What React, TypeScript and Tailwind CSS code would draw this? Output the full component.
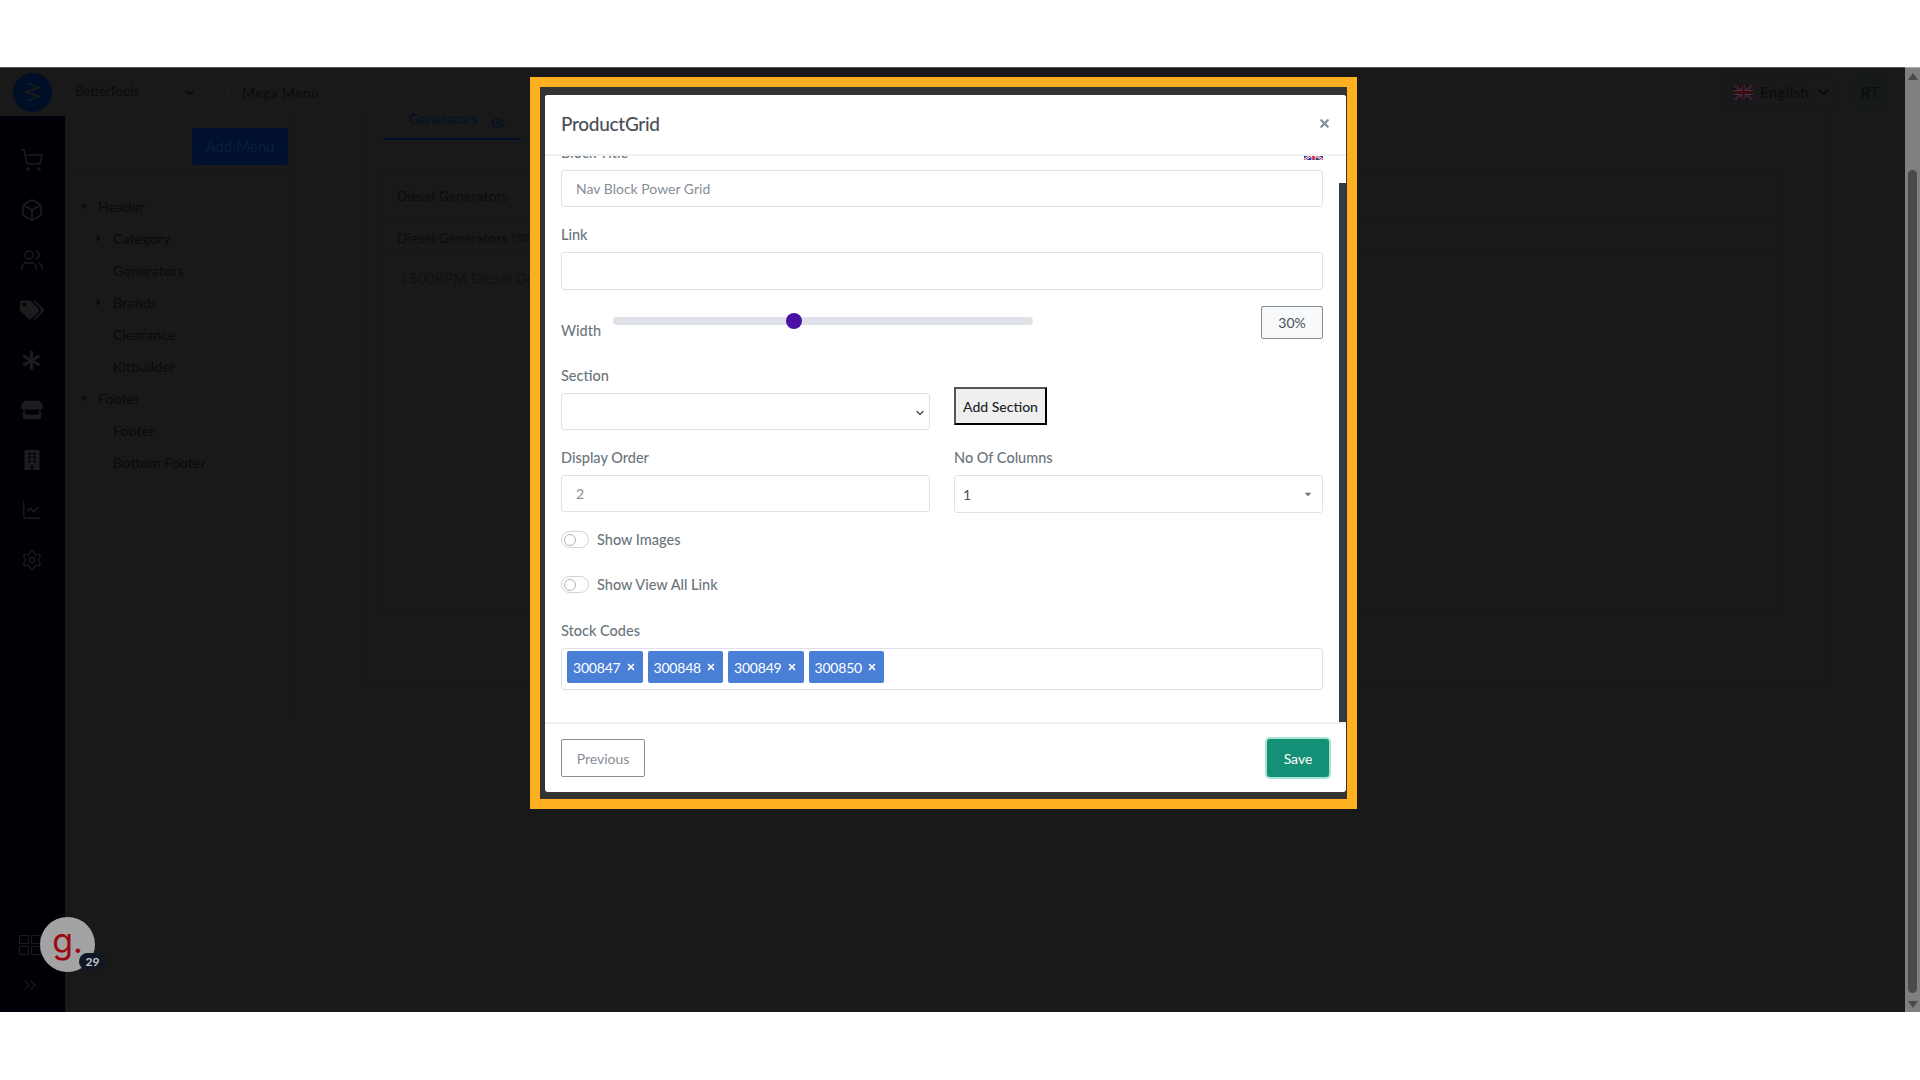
import { Box, ChevronDown, ChevronRight, ChevronsRight, Eye, LineChart, Settings, ShoppingCart, Users, X } from 'lucide-react';
import { FaAsterisk, FaBuilding, FaCaretDown, FaCaretRight, FaStore, FaTags } from 'react-icons/fa';

const tree = [
  { label: 'Header', level: 0, caret: 'down' },
  { label: 'Category', level: 1, caret: 'right' },
  { label: 'Generators', level: 1 },
  { label: 'Brands', level: 1, caret: 'right' },
  { label: 'Clearance', level: 1 },
  { label: 'Kitbuilder', level: 1 },
  { label: 'Footer', level: 0, caret: 'down' },
  { label: 'Footer', level: 1 },
  { label: 'Bottom Footer', level: 1 },
];

const stockCodes = ['300847', '300848', '300849', '300850'];

function UkFlag({ className, bright }: { className?: string; bright?: boolean }) {
  const blue = bright ? '#2a3f8f' : '#0b0b2a';
  const white = bright ? '#ffffff' : '#3a3a3a';
  const red = bright ? '#d0203a' : '#3d0a14';
  return (
    <svg viewBox="0 0 60 40" className={className} preserveAspectRatio="none">
      <rect width="60" height="40" fill={blue} />
      <path d="M0 0L60 40M60 0L0 40" stroke={white} strokeWidth="8" />
      <path d="M0 0L60 40M60 0L0 40" stroke={red} strokeWidth="3" />
      <path d="M30 0V40M0 20H60" stroke={white} strokeWidth="13" />
      <path d="M30 0V40M0 20H60" stroke={red} strokeWidth="8" />
    </svg>
  );
}

function Toggle({ label }: { label: string }) {
  return (
    <div className="flex h-[17px] items-center gap-2">
      <div className="flex h-[17px] w-[28px] items-center rounded-full border border-[#ced4da] bg-white pl-[2px]">
        <div className="h-[12px] w-[12px] rounded-full border border-[#adb5bd] bg-white" />
      </div>
      <span className="text-[14.5px] font-medium text-[#6c757d]">{label}</span>
    </div>
  );
}

function FieldLabel({ children }: { children: React.ReactNode }) {
  return <div className="mb-[7px] h-[22px] text-[14.5px] leading-[24px] font-medium text-[#6c757d]">{children}</div>;
}

function Sidebar() {
  return (
    <aside className="flex w-[65px] shrink-0 flex-col items-center bg-[#000006] pt-[19px] pr-[2px] text-[#1c1c1c]">
      <div className="flex flex-col items-center [&>div]:flex [&>div]:h-[50px] [&>div]:items-center">
        <div><ShoppingCart size={24} strokeWidth={1.5} /></div>
        <div><Box size={24} strokeWidth={1.5} /></div>
        <div><Users size={24} strokeWidth={1.5} /></div>
        <div><FaTags size={24} /></div>
        <div><FaAsterisk size={19} /></div>
        <div><FaStore size={22} /></div>
        <div><FaBuilding size={20} /></div>
        <div><LineChart size={22} strokeWidth={1.5} /></div>
        <div><Settings size={22} strokeWidth={1.5} /></div>
      </div>
      <div className="mt-auto mb-[17px] flex flex-col items-center gap-[20px]">
        <div className="grid grid-cols-2 gap-[2px] pr-[4px]">
          <div className="h-[9px] w-[10px] border border-[#1c1c1c]" />
          <div className="h-[9px] w-[10px] border border-[#1c1c1c]" />
          <div className="h-[9px] w-[10px] border border-[#1c1c1c]" />
          <div className="h-[9px] w-[10px] border border-[#1c1c1c]" />
        </div>
        <ChevronsRight size={20} strokeWidth={1.5} className="mr-[4px]" />
      </div>
    </aside>
  );
}

function Background() {
  return (
    <div className="flex h-[945px] flex-col border-t border-[#555] bg-[#191919]">
      {/* top bar */}
      <header className="flex h-[48px] shrink-0 items-center text-[#0b0b0b]">
        <div className="ml-[13px] flex h-[39px] w-[39px] items-center justify-center rounded-full bg-[#000f26]">
          <svg viewBox="0 0 20 24" className="h-[22px] w-[18px]" fill="none" stroke="#1b1b1b" strokeWidth="2">
            <path d="M3 2L16 7L3 12L16 17L3 22" />
          </svg>
        </div>
        <span className="ml-[23px] w-[108px] text-[13px]">BetterTools</span>
        <ChevronDown size={13} strokeWidth={3} />
        <ChevronRight size={12} className="ml-[27px] text-[#222]" />
        <span className="ml-[7px] text-[14px] tracking-wide">Mega Menu</span>
        <div className="ml-auto flex h-[27px] w-[114px] items-center rounded-sm border border-[#171717] pl-[12px]">
          <UkFlag className="h-[15px] w-[19px]" />
          <span className="ml-[7px] text-[15px] tracking-wide">English</span>
          <ChevronDown size={15} strokeWidth={3} className="ml-[7px]" />
        </div>
        <div className="mr-[18px] ml-[18px] flex h-[34px] w-[34px] items-center justify-center rounded-full bg-[#141a1a] text-[16px]">RT</div>
      </header>

      <div className="flex min-h-0 flex-1">
        <Sidebar />

        {/* menu tree */}
        <section className="h-[600px] w-[230px] shrink-0 border-r border-[#171717]">
          <div className="flex h-[60px] justify-end border-b border-[#171717] pt-[12px] pr-[6px]">
            <div className="flex h-[37px] w-[96px] items-center justify-center rounded-sm bg-[#00102e] text-[15px] text-[#0a1e3a]">Add Menu</div>
          </div>
          <div className="pt-[14px]">
            {tree.map((item, i) => (
              <div key={i} className={`flex h-[32px] items-center text-[14px] tracking-[0.2px] text-[#0a0a0a] ${item.level === 0 ? 'pl-[13px]' : 'pl-[28px]'}`}>
                <span className="flex w-[20px] justify-start">
                  {item.caret === 'down' && <FaCaretDown size={12} />}
                  {item.caret === 'right' && <FaCaretRight size={12} />}
                </span>
                {item.label}
              </div>
            ))}
          </div>
        </section>

        {/* tabs and grid behind the modal */}
        <section className="ml-[72px] flex h-[571px] w-[1459px] flex-col border-r border-b border-l border-[#171717] px-[15px]">
          <div className="flex h-[24px] w-[138px] items-start gap-[13px] border-b-2 border-[#001028] pl-[26px] text-[14px] leading-[6px] text-[#001028]">
            Generators <Eye size={14} />
          </div>
          <div className="mt-[31px] h-[445px] w-[1399px] border border-[#171717] text-[#0d0d0d]">
            <div className="flex h-[48px] items-center border-b border-[#171717] pl-[13px] text-[14px] font-medium">Diesel Generators</div>
            <div className="flex h-[36px] items-center border-b border-[#171717] pl-[13px] text-[14px] font-medium">
              Diesel Generators <span className="ml-1 text-[12px] font-normal">(30%)</span>
            </div>
            <div className="pt-[11px] pl-[16px] text-[15px] text-[#111111]">1500RPM Diesel Generators</div>
          </div>
        </section>
      </div>
    </div>
  );
}

function Modal() {
  return (
    <div className="absolute top-[77px] left-[530px] h-[732px] w-[827px] border-[10px] border-[#ffb020] bg-[#333333] pt-[8px] pr-[1px] pb-[7px] pl-[5px]">
      <div className="relative flex h-[697px] flex-col overflow-hidden rounded-[3px] bg-white">
        <div className="relative z-10 flex h-[61px] shrink-0 items-center justify-between border-b-2 border-[#f0f1f3] bg-white pr-[15px] pl-[16px]">
          <h2 className="text-[19px] font-medium tracking-[-0.3px] text-[#495057]">ProductGrid</h2>
          <X size={13} strokeWidth={4} className="mb-[3px] text-[#868e96]" />
        </div>

        <div className="min-h-0 flex-1 overflow-hidden pr-[23px] pl-[16px]">
          <div className="relative -mt-[15px]">
            <FieldLabel>Block Title</FieldLabel>
            <UkFlag bright className="absolute top-[7px] right-0 h-[12px] w-[19px]" />
            <input readOnly value="Nav Block Power Grid" className="block h-[37px] w-full rounded-[3px] border border-[#dee2e6] px-[14px] text-[14px] text-[#868e96] outline-none" />

            <div className="mt-[16px]">
              <FieldLabel>Link</FieldLabel>
              <input readOnly className="block h-[38px] w-full rounded-[3px] border border-[#dee2e6] px-[14px] text-[14px] outline-none" />
            </div>

            <div className="mt-[16px] flex h-[33px] items-start">
              <span className="mt-[15px] w-[52px] text-[14.5px] leading-[20px] font-medium text-[#6c757d]">Width</span>
              <div className="relative mt-[11px] h-[8px] w-[420px] rounded-full bg-[#dee2e6]">
                <div className="absolute -top-[4px] left-[173px] h-[16px] w-[16px] rounded-full bg-[#4a12a4]" />
              </div>
              <div className="ml-auto flex h-[33px] w-[62px] items-center justify-center rounded-[2px] border border-[#868e96] bg-[#f8f9fa] text-[14px] text-[#495057]">30%</div>
            </div>

            <div className="mt-[25px] flex gap-[24px]">
              <div className="w-[369px]">
                <FieldLabel>Section</FieldLabel>
                <div className="flex h-[37px] items-center justify-end rounded-[3px] border border-[#dee2e6] pr-[3px]">
                  <ChevronDown size={12} strokeWidth={3} className="mt-[2px] text-[#555]" />
                </div>
              </div>
              <button className="mt-[23px] h-[38px] w-[93px] border-2 border-t-[#555] border-r-black border-b-black border-l-[#555] bg-[#efefef] text-[14px] font-medium text-[#212529]">Add Section</button>
            </div>

            <div className="mt-[16px] flex gap-[24px]">
              <div className="w-[369px]">
                <FieldLabel>Display Order</FieldLabel>
                <input readOnly value="2" className="block h-[37px] w-full rounded-[3px] border border-[#dee2e6] px-[14px] text-[14px] text-[#868e96] outline-none" />
              </div>
              <div className="w-[369px]">
                <FieldLabel>No Of Columns</FieldLabel>
                <div className="flex h-[38px] items-center justify-between rounded-[3px] border border-[#dee2e6] pr-[9px] pl-[8px] text-[14px] text-[#495057]">
                  1
                  <FaCaretDown size={10} className="text-[#777]" />
                </div>
              </div>
            </div>

            <div className="mt-[18px] flex flex-col gap-[28px]">
              <Toggle label="Show Images" />
              <Toggle label="Show View All Link" />
            </div>

            <div className="mt-[26px]">
              <FieldLabel>Stock Codes</FieldLabel>
              <div className="flex h-[42px] gap-[5px] rounded-[3px] border border-[#dee2e6] pt-[2px] pl-[5px]">
                {stockCodes.map((code) => (
                  <div key={code} className="flex h-[32px] w-[75.5px] items-center justify-between rounded-[2px] bg-[#4a7fd6] pr-[7px] pl-[6px] text-[14px] tracking-[-0.2px] text-white">
                    {code}
                    <X size={10} strokeWidth={4} />
                  </div>
                ))}
              </div>
            </div>
          </div>
        </div>

        {/* scrollbar of the modal body */}
        <div className="absolute top-[88px] right-0 h-[539px] w-[7px] bg-[#343a46]" />

        <div className="flex h-[70px] shrink-0 items-start justify-between border-t-2 border-[#f0f1f3] pt-[15px] pr-[17px] pl-[16px]">
          <button className="h-[38px] w-[84px] rounded-[2px] border border-[#868e96] text-[14px] text-[#868e96]">Previous</button>
          <button className="h-[38px] w-[62px] rounded-[3px] bg-[#149076] text-[14px] text-white ring-2 ring-[#a5e3d3]">Save</button>
        </div>
      </div>
    </div>
  );
}

export default function App() {
  return (
    <div className="relative h-[1080px] w-[1920px] overflow-hidden bg-white font-[family-name:Lato,sans-serif]">
      <div className="h-[67px]" />
      <div className="flex">
        <div className="min-w-0 flex-1">
          <Background />
        </div>
        {/* browser scrollbar */}
        <div className="flex h-[945px] w-[15px] shrink-0 flex-col items-center border-t border-[#aaa] bg-[#7f7f7f]">
          <div className="mt-[5px] h-0 w-0 border-x-[5px] border-b-[7px] border-x-transparent border-b-[#4a4a4a]" />
          <div className="mt-[90px] h-[823px] w-[9px] rounded-full bg-[#4a4a4a]" />
          <div className="mt-[8px] h-0 w-0 border-x-[5px] border-t-[7px] border-x-transparent border-t-[#4a4a4a]" />
        </div>
      </div>

      <Modal />

      {/* grammarly style bubble */}
      <div className="absolute top-[917px] left-[40px] flex h-[55px] w-[55px] items-center justify-center rounded-full bg-[#a3a3a3] pb-[8px] font-[family-name:Inter,sans-serif] text-[34px] leading-none text-[#9b0a10]">g.</div>
      <div className="absolute top-[953px] left-[79px] flex h-[17px] w-[27px] items-center justify-center rounded-full bg-[#101725] text-[12px] font-bold text-[#c8c8c8]">29</div>
    </div>
  );
}
